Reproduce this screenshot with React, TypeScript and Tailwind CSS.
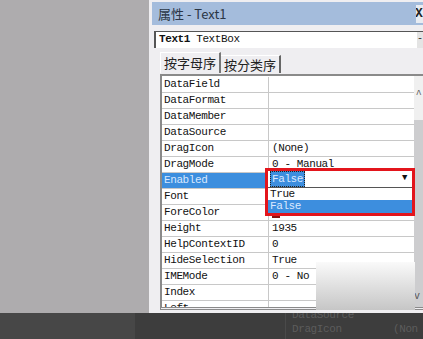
import { ReactNode } from "react";

const mono = "font-['Liberation_Mono','Noto_Sans_CJK_SC',monospace]";
const cjk = "font-['Noto_Sans_CJK_SC','Liberation_Sans',sans-serif]";

type Row = { name: string; value?: ReactNode };

const rows: Row[] = [
	{ name: "DataField" },
	{ name: "DataFormat" },
	{ name: "DataMember" },
	{ name: "DataSource" },
	{ name: "DragIcon", value: "(None)" },
	{ name: "DragMode", value: "0 - Manual" },
	{ name: "Enabled" },
	{ name: "Font" },
	{ name: "ForeColor", value: <span className="inline-block w-[8px] h-[10px] mt-[3px] bg-[#8a1010]" /> },
	{ name: "Height", value: "1935" },
	{ name: "HelpContextID", value: "0" },
	{ name: "HideSelection", value: "True" },
	{ name: "IMEMode", value: "0 - No" },
	{ name: "Index" },
	{ name: "Left" },
];

function PropRow({ row }: { row: Row }) {
	const active = row.name === "Enabled";
	return (
		<div className="flex h-[16px] border-b border-[#c8c8c8]">
			<div
				className={`w-[107px] pl-[2px] border-r border-[#c8c8c8] leading-[15px] ${
					active ? "bg-[#3c8ede] text-[#d8e8ff]" : "text-[#111]"
				}`}
			>
				{row.name}
			</div>
			<div className="flex-1 pl-[3px] leading-[15px] text-[#111]">{row.value}</div>
		</div>
	);
}

export default function App() {
	return (
		<div className={`w-[423px] h-[339px] flex flex-col overflow-hidden ${mono} text-[11px] tracking-[-0.4px]`}>
			<div className="flex h-[313px]">
				<div className="w-[149px] bg-[#aeacae]" />
				<div className="flex-1 flex flex-col bg-[#efeef1] pt-[2px] pl-[3px] relative">
					{/* title bar */}
					<div className="h-[23px] bg-[#a4bcdc] flex items-center justify-between pl-[6px]">
						<span className={`${cjk} text-[13px] tracking-normal text-[#2b3645]`}>属性 - Text1</span>
						<div className="w-[7px] h-[18px] bg-[#e8ecf2] flex items-center overflow-hidden">
							<span className="font-bold text-[13px] text-[#222] -ml-[1px]">X</span>
						</div>
					</div>
					{/* object combo */}
					<div className="mt-[6px] ml-[2px] h-[17px] flex bg-white border-l-2 border-t border-[#555]">
						<div className="flex-1 pl-[3px] leading-[15px] text-[#111]">
							<span className="font-bold">Text1</span> TextBox
						</div>
						<div className="w-[6px] bg-[#e4e4e4] text-[10px] leading-[14px] text-[#333] overflow-hidden">-</div>
					</div>
					{/* tabs */}
					<div className={`mt-[4px] h-[21px] flex items-end pl-[8px] ${cjk} text-[13px] tracking-normal text-[#222]`}>
						<div className="h-[21px] px-[3px] leading-[20px] border-t border-l border-white bg-[#efeef1] border-r-2 border-r-[#777]">
							按字母序
						</div>
						<div className="h-[18px] px-[3px] leading-[17px] border-t border-white border-r-2 border-r-[#666]">
							按分类序
						</div>
					</div>
					{/* grid */}
					<div className="mt-[1px] ml-[8px] flex-1 mb-[3px] border-2 border-double border-[#8a8a8a] border-r-0 border-b-[3px] flex overflow-hidden">
						<div className="flex-1 bg-white overflow-hidden pt-[1px]">
							{rows.map((r) => (
								<PropRow key={r.name} row={r} />
							))}
						</div>
						<div className="w-[9px] bg-[#f0f0f0] flex flex-col">
							<div className="h-[20px] flex items-center justify-center text-[10px] text-[#555] mt-[8px]">^</div>
							<div className="flex-1 bg-[#cdcdcf] mt-[16px]" />
							<div className="h-[18px] bg-[#cdcdcf] text-[10px] text-[#555]">v</div>
						</div>
					</div>

					{/* dropdown open on Enabled */}
					<div className="absolute left-[116px] top-[168px] w-[150px] h-[48px] border-[3px] border-[#e3151c] bg-white flex flex-col">
						<div className="h-[17px] flex items-center border-b border-[#555]">
							<span className="ml-[2px] px-[1px] bg-[#3d8ede] text-[#dce9ff] leading-[14px] border border-dotted border-[#222]">
								False
							</span>
							<span className="ml-auto mr-[5px] text-[9px] text-[#111]">▼</span>
						</div>
						<div className="h-[12px] leading-[12px] pl-[2px] text-[#111]">True</div>
						<div className="flex-1 leading-[12px] pl-[2px] bg-[#3d8ede] text-[#dce9ff]">False</div>
					</div>

					{/* watermark overlay */}
					<div className="absolute left-[167px] top-[262px] w-[99px] h-[48px] bg-gradient-to-b from-[#fafafa] to-[#c6c6c6]" />
				</div>
			</div>
			{/* bottom bar */}
			<div className="h-[26px] flex">
				<div className="w-[135px] bg-[#474747]" />
				<div className="flex-1 bg-[#3d3d3d] relative overflow-hidden text-[#5c5c5c] text-[11px]">
					<div className="absolute left-[157px] -top-[4px] leading-[13px]">DataSource</div>
					<div className="absolute left-[157px] top-[10px] leading-[13px]">DragIcon</div>
					<div className="absolute left-[258px] top-[10px] leading-[13px]">(Non</div>
					<div className="absolute left-[150px] top-0 bottom-0 w-px bg-[#4a4a4a]" />
				</div>
			</div>
		</div>
	);
}
